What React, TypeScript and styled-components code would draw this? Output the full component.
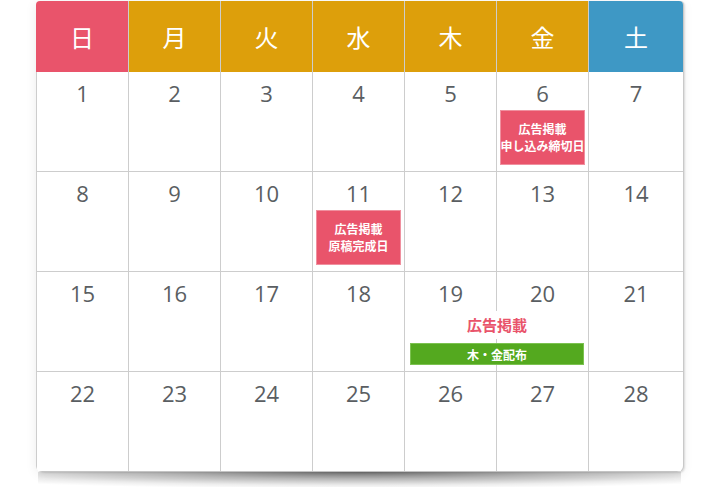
import React from "react";
import styled, { createGlobalStyle } from "styled-components";

const GlobalStyle = createGlobalStyle`
  html, body { margin: 0; padding: 0; background: #fff; }
  body { font-family: "Open Sans", "Noto Sans CJK JP", sans-serif; }
  * { box-sizing: border-box; }
`;

const COLS = "93px repeat(5, 92px) 1fr";
const LINE = "#cdcdcd";
const RED = "#e9546b";
const GOLD = "#dd9f0b";
const BLUE = "#3e98c5";
const GREEN = "#54a91f";

const Page = styled.div`
  padding: 1px 0 0 36px;
`;

const Card = styled.div`
  width: 647px;
  display: flex;
  flex-direction: column;
`;

const Inner = styled.div`
  position: relative;
  z-index: 1;
  border-radius: 4px 4px 6px 6px;
  overflow: hidden;
  background: #fff;
  box-shadow: 1px 0 0 #c9c9c9, 2px 1px 2px rgba(0, 0, 0, 0.12),
    0 2px 12px rgba(0, 0, 0, 0.08);
`;

const Shadow = styled.div`
  height: 17px;
  margin: 0 2px;
  background: radial-gradient(
    72% 100% at 50% 0%,
    rgba(0, 0, 0, 0.55) 0%,
    rgba(0, 0, 0, 0.28) 40%,
    rgba(0, 0, 0, 0.07) 78%,
    rgba(0, 0, 0, 0) 100%
  );
`;

const Header = styled.div`
  display: grid;
  grid-template-columns: ${COLS};
  height: 71px;
`;

const HeadCell = styled.div<{ $bg: string; $last?: boolean }>`
  display: flex;
  align-items: center;
  justify-content: center;
  background: ${(p) => p.$bg};
  color: #fff;
  font-family: "Noto Sans CJK JP", sans-serif;
  font-size: 24px;
  font-weight: 400;
  border-right: ${(p) => (p.$last ? "none" : `1px solid ${LINE}`)};
  padding-bottom: 1px;
`;

const Week = styled.div<{ $last?: boolean }>`
  display: grid;
  grid-template-columns: ${COLS};
  grid-template-rows: 99px;
  border-bottom: 1px solid ${(p) => (p.$last ? "#c4c4c4" : LINE)};
`;

const DayCell = styled.div<{ $col: number }>`
  grid-row: 1;
  grid-column: ${(p) => p.$col};
  display: flex;
  flex-direction: column;
  align-items: center;
  padding-top: 6px;
  border-right: ${(p) => (p.$col === 7 ? "none" : `1px solid ${LINE}`)};
  border-left: ${(p) => (p.$col === 1 ? `1px solid ${LINE}` : "none")};
`;

const DayNum = styled.div`
  font-family: "Open Sans", sans-serif;
  font-size: 22px;
  line-height: 30px;
  color: #5a5e62;
`;

const Badge = styled.div`
  margin-top: 2px;
  width: 85px;
  height: 55px;
  background: ${RED};
  border: 1px solid #f0909f;
  color: #fff;
  font-family: "Noto Sans CJK JP", sans-serif;
  font-weight: 700;
  font-size: 12px;
  line-height: 17px;
  display: flex;
  flex-direction: column;
  align-items: center;
  justify-content: center;
  white-space: nowrap;
  padding-bottom: 1px;
`;

const SpanEvent = styled.div<{ $from: number; $to: number }>`
  grid-row: 1;
  grid-column: ${(p) => p.$from} / ${(p) => p.$to + 1};
  align-self: start;
  margin-top: 39px;
  display: flex;
  flex-direction: column;
  align-items: center;
  z-index: 2;
`;

const EventLabel = styled.div`
  background: #fff;
  color: ${RED};
  font-family: "Noto Sans CJK JP", sans-serif;
  font-weight: 700;
  font-size: 15px;
  line-height: 28px;
  padding: 0 4px;
`;

const EventBar = styled.div`
  margin-top: 4px;
  align-self: stretch;
  margin-left: 5px;
  margin-right: 5px;
  height: 22px;
  background: ${GREEN};
  border: 1px solid #7cc250;
  color: #fff;
  font-family: "Noto Sans CJK JP", sans-serif;
  font-weight: 700;
  font-size: 12px;
  display: flex;
  align-items: center;
  justify-content: center;
`;

const heads: { label: string; bg: string }[] = [
  { label: "日", bg: RED },
  { label: "月", bg: GOLD },
  { label: "火", bg: GOLD },
  { label: "水", bg: GOLD },
  { label: "木", bg: GOLD },
  { label: "金", bg: GOLD },
  { label: "土", bg: BLUE },
];

const badges: Record<number, string[]> = {
  6: ["広告掲載", "申し込み締切日"],
  11: ["広告掲載", "原稿完成日"],
};

export default function App() {
  const weeks = [0, 1, 2, 3].map((w) =>
    Array.from({ length: 7 }, (_, i) => w * 7 + i + 1)
  );
  return (
    <>
      <GlobalStyle />
      <Page>
        <Card>
          <Inner>
            <Header>
              {heads.map((h, i) => (
                <HeadCell key={h.label} $bg={h.bg} $last={i === 6}>
                  {h.label}
                </HeadCell>
              ))}
            </Header>
            {weeks.map((days, w) => (
              <Week key={w} $last={w === 3}>
                {days.map((d, i) => (
                  <DayCell key={d} $col={i + 1}>
                    <DayNum>{d}</DayNum>
                    {badges[d] && (
                      <Badge>
                        {badges[d].map((t) => (
                          <span key={t}>{t}</span>
                        ))}
                      </Badge>
                    )}
                  </DayCell>
                ))}
                {w === 2 && (
                  <SpanEvent $from={5} $to={6}>
                    <EventLabel>広告掲載</EventLabel>
                    <EventBar>木・金配布</EventBar>
                  </SpanEvent>
                )}
              </Week>
            ))}
          </Inner>
          <Shadow />
        </Card>
      </Page>
    </>
  );
}
